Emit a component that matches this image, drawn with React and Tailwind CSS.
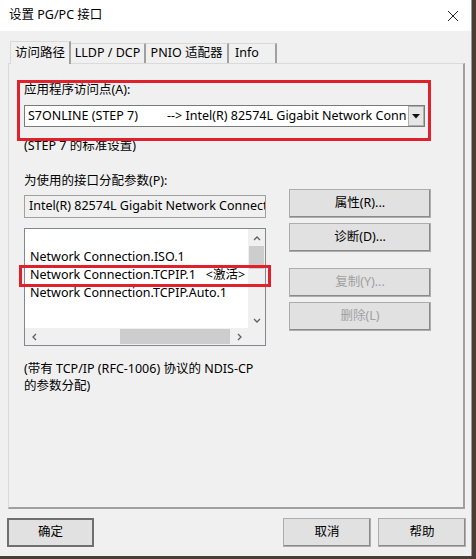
import React from 'react';

const FONT = { fontFamily: '"Noto Sans", "Noto Sans CJK SC", sans-serif' };

const Chevron = ({ dir }) => {
  const pts = {
    up: '2,7 5,4 8,7',
    down: '2,4 5,7 8,4',
    left: '7,2 4,5 7,8',
    right: '4,2 7,5 4,8',
  }[dir];
  return (
    <svg width="10" height="10" viewBox="0 0 10 10">
      <polyline points={pts} fill="none" stroke="#606060" strokeWidth="1.3" />
    </svg>
  );
};

const Button = ({ children, disabled, primary, className = '' }) => (
  <div
    className={`flex items-center justify-center bg-[#e1e1e1] text-[12.5px] ${
      primary ? 'border-2 border-[#6f6f6f]' : 'border border-[#adadad] shadow-[inset_-1px_-1px_0_#8a8a8a]'
    } ${disabled ? 'text-[#a0a0a0]' : 'text-black'} ${className}`}
  >
    {children}
  </div>
);

export default function App() {
  return (
    <div className="w-[476px] h-[559px] bg-[#4b3d35] overflow-hidden" style={FONT}>
      <div className="w-[472px] h-[556px] bg-[#f0f0f0] flex flex-col border-r border-[#9a9a9a]">
        {/* title bar */}
        <div className="h-[31px] bg-white flex items-center justify-between pl-[9px] pr-[12px] shrink-0">
          <span className="text-[12.5px] text-black">设置 PG/PC 接口</span>
          <svg width="12" height="12" viewBox="0 0 12 12">
            <path d="M1 1 L11 11 M11 1 L1 11" stroke="#222" strokeWidth="1" fill="none" />
          </svg>
        </div>

        <div className="px-[8px] pt-[10px]">
          {/* tabs */}
          <div className="flex items-end h-[23px] pl-[2px] relative z-10 text-[12.5px]">
            <div className="h-[23px] w-[61px] flex items-center justify-center bg-[#f0f0f0] border-l border-t border-[#d9d9d9] border-r-2 border-r-[#a0a0a0]">
              访问路径
            </div>
            <div className="h-[20px] w-[75px] mb-[1px] flex items-center justify-center border-t border-[#d9d9d9] border-r-2 border-r-[#a0a0a0]">
              LLDP / DCP
            </div>
            <div className="h-[20px] w-[83px] mb-[1px] flex items-center justify-center border-t border-[#d9d9d9] border-r-2 border-r-[#a0a0a0]">
              PNIO 适配器
            </div>
            <div className="h-[20px] w-[48px] mb-[1px] flex items-center pl-[6px] border-t border-[#d9d9d9] border-r-2 border-r-[#a0a0a0]">
              Info
            </div>
          </div>

          {/* tab panel */}
          <div className="relative -mt-[1px] h-[446px] w-[457px] border-l border-t border-[#dadada] border-r-2 border-b-2 border-r-[#a0a0a0] border-b-[#a0a0a0] pl-[15px] pt-[18px] text-[12.5px] text-black">
            <div className="h-[16px] leading-[16px]">应用程序访问点(A):</div>
            <div className="mt-[7px] h-[22px] w-[401px] bg-white border border-[#7a7a7a] flex items-center">
              <div className="flex-1 flex items-center overflow-hidden whitespace-nowrap pl-[3px]">
                <span className="w-[139px] shrink-0">S7ONLINE (STEP 7)</span>
                <span>--&gt; Intel(R) 82574L Gigabit Network Conn</span>
              </div>
              <div className="w-[16px] h-[20px] bg-[#e6e6e6] border border-[#b0b0b0] flex items-center justify-center shrink-0">
                <svg width="8" height="5" viewBox="0 0 8 5">
                  <polygon points="0,0 8,0 4,4.5" fill="#111" />
                </svg>
              </div>
            </div>
            <div className="mt-[11px] h-[16px] leading-[16px]">(STEP 7 的标准设置)</div>
            <div className="mt-[19px] h-[16px] leading-[16px]">为使用的接口分配参数(P):</div>

            <div className="flex">
              <div className="w-[242px] pt-[6px]">
                <div className="h-[23px] border border-[#a0a0a0] bg-[#f0f0f0] flex items-center pl-[4px] overflow-hidden whitespace-nowrap">
                  Intel(R) 82574L Gigabit Network Connect
                </div>
                <div className="mt-[10px] h-[118px] border border-[#828790] bg-white grid grid-cols-[223px_17px] grid-rows-[99px_17px]">
                  <div className="pl-[5px] pt-[19px] leading-[18px] whitespace-nowrap overflow-hidden">
                    <div>Network Connection.ISO.1</div>
                    <div>
                      Network Connection.TCPIP.1<span className="ml-[10px]">&lt;激活&gt;</span>
                    </div>
                    <div>Network Connection.TCPIP.Auto.1</div>
                  </div>
                  <div className="bg-[#f0f0f0] flex flex-col items-center">
                    <div className="h-[17px] flex items-center justify-center"><Chevron dir="up" /></div>
                    <div className="h-[23px] w-[15px] bg-[#cdcdcd]" />
                    <div className="flex-1" />
                    <div className="h-[17px] flex items-center justify-center"><Chevron dir="down" /></div>
                  </div>
                  <div className="bg-[#f0f0f0] flex items-center">
                    <div className="w-[17px] flex items-center justify-center"><Chevron dir="left" /></div>
                    <div className="w-[78px]" />
                    <div className="w-[110px] h-[15px] bg-[#cdcdcd]" />
                    <div className="flex-1 flex items-center justify-center"><Chevron dir="right" /></div>
                  </div>
                  <div className="bg-[#f0f0f0]" />
                </div>
              </div>

              <div className="ml-[23px] w-[142px] flex flex-col">
                <Button className="h-[29px]">属性(R)...</Button>
                <Button className="h-[29px] mt-[5px]">诊断(D)...</Button>
                <Button className="h-[29px] mt-[16px]" disabled>复制(Y)...</Button>
                <Button className="h-[29px] mt-[5px]" disabled>删除(L)</Button>
              </div>
            </div>

            <div className="mt-[14px] leading-[17px]">
              <div>(带有 TCP/IP (RFC-1006) 协议的 NDIS-CP</div>
              <div>的参数分配)</div>
            </div>

            {/* annotation boxes */}
            <div className="absolute left-[8px] top-[16px] w-[414px] h-[61px] border-[3px] border-[#e0202a]" />
            <div className="absolute left-[10px] top-[201px] w-[252px] h-[22px] border-[3px] border-[#e0202a]" />
          </div>
        </div>

        {/* bottom buttons */}
        <div className="flex pl-[7px] pr-[5px] mt-[9px]">
          <Button primary className="w-[87px] h-[29px]">确定</Button>
          <div className="flex-1" />
          <Button className="w-[88px] h-[29px]">取消</Button>
          <Button className="w-[88px] h-[29px] ml-[7px]">帮助</Button>
        </div>
      </div>
    </div>
  );
}
